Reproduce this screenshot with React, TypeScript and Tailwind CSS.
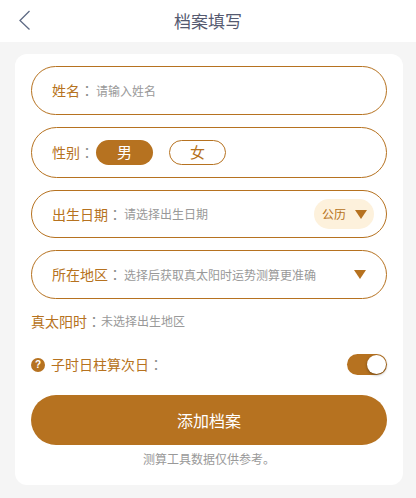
export default function App() {
  const font = { fontFamily: '"Noto Sans CJK SC", sans-serif' };
  const colonFont = { fontFamily: '"Noto Sans CJK TC", sans-serif' };
  const Tri = () => (
    <svg width="12" height="9" viewBox="0 0 12 9"><path d="M0 0H12L6 9Z" fill="#b67220" /></svg>
  );
  const Colon = () => <span style={colonFont} className="text-[14px] text-[#8a8a8a] w-[16px] shrink-0">：</span>;
  return (
    <div style={font} className="w-[416px] h-[498px] bg-[#f5f5f5] overflow-hidden font-normal">
      <header className="h-[42px] bg-white flex items-center justify-center relative">
        <svg className="absolute left-[18px] top-[10px]" width="13" height="20" viewBox="0 0 13 20" fill="none">
          <path d="M11.5 1L2 10.5L11.5 19.5" stroke="#5f6b85" strokeWidth="1.3" />
        </svg>
        <span className="text-[17px] text-[#555a70] leading-[42px]">档案填写</span>
      </header>
      <main className="ml-[15px] mt-[12px] w-[388px] h-[431px] bg-white rounded-[12px] px-[16px] pt-[12px] flex flex-col">
        <div className="h-[49px] rounded-full border border-[#b67220] flex items-center pl-[20px] shrink-0">
          <span className="text-[14px] text-[#b67220]">姓名</span>
          <Colon />
          <span className="text-[12px] text-[#999]">请输入姓名</span>
        </div>
        <div className="h-[51px] mt-[12px] rounded-full border border-[#b67220] flex items-center pl-[20px] shrink-0">
          <span className="text-[14px] text-[#b67220]">性别</span>
          <Colon />
          <span className="w-[57px] h-[25px] rounded-full bg-[#b67220] text-white text-[15px] flex items-center justify-center">男</span>
          <span className="w-[57px] h-[25px] ml-[16px] rounded-full border border-[#b67220] text-[#b67220] text-[15px] flex items-center justify-center">女</span>
        </div>
        <div className="h-[48px] mt-[12px] rounded-full border border-[#b67220] flex items-center pl-[20px] pr-[12px] shrink-0">
          <span className="text-[14px] text-[#b67220]">出生日期</span>
          <Colon />
          <span className="text-[12px] text-[#999]">请选择出生日期</span>
          <span className="ml-auto w-[60px] h-[30px] rounded-full bg-[#fdf1dc] flex items-center pl-[8px] gap-[9px]">
            <span className="text-[12px] text-[#b67220]">公历</span>
            <Tri />
          </span>
        </div>
        <div className="h-[49px] mt-[12px] rounded-full border border-[#b67220] flex items-center pl-[20px] pr-[20px] shrink-0">
          <span className="text-[14px] text-[#b67220]">所在地区</span>
          <Colon />
          <span className="text-[12px] text-[#999]">选择后获取真太阳时运势测算更准确</span>
          <span className="ml-auto flex"><Tri /></span>
        </div>
        <div className="mt-[13px] h-[18px] flex items-center">
          <span className="text-[14px] text-[#b67220]">真太阳时</span>
          <span style={colonFont} className="text-[14px] text-[#8a8a8a] w-[14px] shrink-0">：</span>
          <span className="text-[12px] text-[#999]">未选择出生地区</span>
        </div>
        <div className="mt-[24px] h-[21px] flex items-center">
          <span className="w-[14px] h-[14px] rounded-full bg-[#b67220] text-white text-[10px] font-bold flex items-center justify-center" style={{ fontFamily: '"Liberation Sans", sans-serif' }}>?</span>
          <span className="text-[14px] text-[#b67220] ml-[6px]">子时日柱算次日</span>
          <span style={colonFont} className="text-[14px] text-[#8a8a8a]">：</span>
          <span className="ml-auto w-[40px] h-[21px] rounded-full bg-[#b67220] flex items-center justify-end">
            <span className="w-[19px] h-[19px] mr-px rounded-full bg-white shadow-[0_1px_3px_rgba(0,0,0,0.4)]" />
          </span>
        </div>
        <button className="mt-[20px] h-[50px] rounded-full bg-[#b67220] text-white text-[16px] shrink-0">添加档案</button>
        <p className="mt-[5px] text-center text-[12px] text-[#999]">测算工具数据仅供参考。</p>
      </main>
    </div>
  );
}
